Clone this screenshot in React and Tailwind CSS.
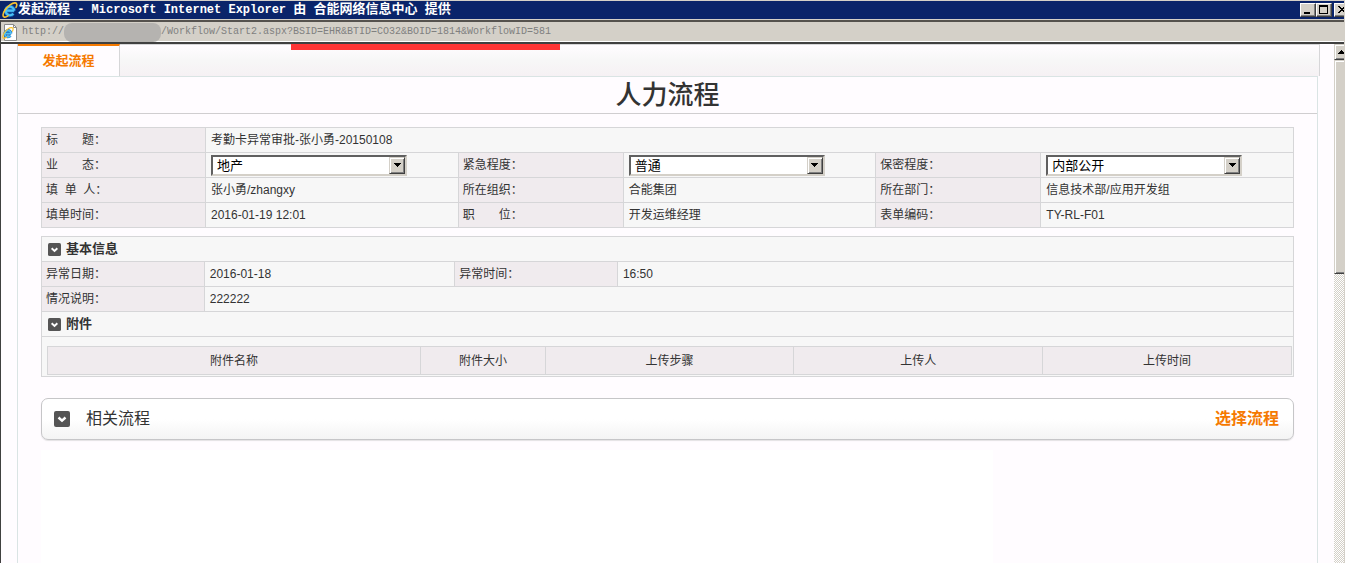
import React from 'react';

const RELATED_URL = '/Workflow/Start2.aspx?BSID=EHR&BTID=CO32&BOID=1814&WorkflowID=581';

const ATTACHMENT_COLUMNS = [
  { name: '附件名称', width: 'w-[30%]' },
  { name: '附件大小', width: 'w-[10%]' },
  { name: '上传步骤', width: 'w-[20%]' },
  { name: '上传人', width: 'w-[20%]' },
  { name: '上传时间', width: 'w-[20%]' },
];

const IeLogo = ({ className }) => (
  <svg viewBox="0 0 16 16" className={className} aria-hidden="true">
    <path
      d="M12.2 8.600H4.200M12.200 8.600A4.300 4.300 0 1 0 11.300 11.600"
      fill="none"
      stroke="#1668b8"
      strokeWidth="3.600"
    />
    <path
      d="M12.200 8.600H4.200M12.200 8.600A4.300 4.300 0 1 0 11.300 11.600"
      fill="none"
      stroke="#4cc0f5"
      strokeWidth="2.200"
    />
    <path
      d="M14 5.500c1.300-2.600 1.100-4.500-.9-4.600C10.300.7 5.700 4 3 8 .8 11.300.4 14.400 2.100 15c1.100.4 2.500-.2 3.900-1.200"
      fill="none"
      stroke="#f7c331"
      strokeWidth="1.600"
      strokeLinecap="round"
    />
  </svg>
);

const ToggleIcon = ({ className }) => (
  <svg viewBox="0 0 16 16" className={className} aria-hidden="true">
    <rect width="16" height="16" rx="2" fill="#555" />
    <path d="M4.500 6.500 8 9.700l3.500-3.200" fill="none" stroke="#fff" strokeWidth="2.400" />
  </svg>
);

const WindowButton = ({ label, children }) => (
  <button
    type="button"
    aria-label={label}
    className="h-[14px] w-4 shrink-0 border border-t-white border-l-white border-r-[#404040] border-b-[#404040] bg-[#d4d0c8] shadow-[inset_-1px_-1px_0_#808080]"
  >
    <svg viewBox="0 0 14 12" className="block h-3 w-[14px]" shapeRendering="crispEdges">
      {children}
    </svg>
  </button>
);

const TitleBar = () => (
  <header className="flex h-[19px] items-center overflow-hidden border-t border-[#d4d0c8] bg-[#0a246a] pl-0.5 text-white">
    <IeLogo className="h-4 w-4 shrink-0" />
    <h1 className="flex-1 whitespace-pre font-['Liberation_Mono','Noto_Sans_CJK_SC',monospace] text-[12px] leading-[18px] font-bold">
      <span className="text-[13px]">发起流程</span>
      {' - Microsoft Internet Explorer '}
      <span className="text-[13px]">由</span>{' '}
      <span className="text-[13px]">合能网络信息中心</span>{' '}
      <span className="text-[13px]">提供</span>
    </h1>
    <div className="flex w-11 overflow-hidden">
      <WindowButton label="最小化">
        <rect x="3" y="8" width="6" height="2" />
      </WindowButton>
      <WindowButton label="最大化">
        <path d="M2 1h9v9H2zM3 3v6h7V3z" fillRule="evenodd" />
      </WindowButton>
      <div className="w-0.5 shrink-0" />
      <WindowButton label="关闭">
        <path d="M3 2h2v1h1v1h2V3h1V2h2v1h-1v1H9v1H8v1h1v1h1v1h1v1H9V8H8V7H6v1H5v1H3V8h1V7h1V6h1V5H5V4H4V3H3z" />
      </WindowButton>
    </div>
  </header>
);

const AddressBar = () => (
  <div className="border-t border-[#d4d0c8]">
    <div className="flex h-6 items-center border-y-2 border-t-[#55524e] border-b-[#404040] border-l border-l-[#404040] bg-[#d4d0c8] shadow-[inset_0_-1px_0_#fff]">
      <svg viewBox="0 0 16 17" className="ml-px h-[17px] w-4" aria-hidden="true">
        <path d="M2.500.5h9l3 3v13h-12z" fill="#fff" stroke="#8a8a8a" />
        <path d="M11.500.5v3h3" fill="none" stroke="#8a8a8a" />
        <svg x="0" y="3" width="12" height="12" viewBox="0 0 16 16">
          <IeLogo />
        </svg>
      </svg>
      <div className="ml-1 flex items-center font-['Liberation_Mono',monospace] text-[10px] leading-[18px] text-[#808080]">
        http://
        <span className="h-[19px] w-[97px] rounded-[8px] bg-[#b5b3b0]" />
        {RELATED_URL}
      </div>
    </div>
  </div>
);

const ScrollBar = () => (
  <div
    className="w-[10px] shrink-0 overflow-hidden bg-[repeating-conic-gradient(#d4d0c8_0_25%,#fff_0_50%)] bg-[length:2px_2px]"
    aria-hidden="true"
  >
    <div className="flex h-4 w-4 items-center border border-[#d4d0c8] border-b-[#404040] bg-[#d4d0c8] pl-[3px] shadow-[inset_1px_1px_0_#fff,inset_-1px_-1px_0_#808080]">
      <svg viewBox="0 0 7 4" className="h-1 w-[7px]" shapeRendering="crispEdges">
        <path d="M3 0h1v1h1v1h1v1h1v1H0V3h1V2h1V1h1z" />
      </svg>
    </div>
    <div className="h-[214px] w-4 border border-[#d4d0c8] border-b-[#404040] bg-[#d4d0c8] shadow-[inset_1px_1px_0_#fff,inset_-1px_-1px_0_#808080]" />
  </div>
);

const Label = ({ children, htmlFor }) => (
  <th
    scope="row"
    className="h-[25px] border border-[#d6d6d8] bg-[#f0ebee] px-1 text-left font-normal whitespace-pre"
  >
    {htmlFor ? <label htmlFor={htmlFor}>{children}</label> : children}
  </th>
);

const Value = ({ children, colSpan }) => (
  <td colSpan={colSpan} className="h-[25px] border border-[#d6d6d8] px-[5px]">
    {children}
  </td>
);

const SelectBox = ({ id, options }) => (
  <div className="relative h-[21px] w-[196px]">
    <select
      id={id}
      className="block h-full w-full appearance-none border-2 border-t-[#606060] border-l-[#606060] border-r-[#d4d0c8] border-b-[#d4d0c8] bg-white pr-5 pl-1 text-[13px] leading-[17px] text-black"
    >
      {options.map((option) => (
        <option key={option}>{option}</option>
      ))}
    </select>
    <span className="pointer-events-none absolute top-0.5 right-0.5 flex h-[17px] w-4 items-center justify-center border border-t-[#d4d0c8] border-l-[#d4d0c8] border-r-[#404040] border-b-[#404040] bg-[#d4d0c8] shadow-[inset_1px_1px_0_#fff,inset_-1px_-1px_0_#808080]">
      <svg viewBox="0 0 7 4" className="h-1 w-[7px]" shapeRendering="crispEdges" aria-hidden="true">
        <path d="M0 0h7v1H6v1H5v1H4v1H3V3H2V2H1V1H0z" />
      </svg>
    </span>
  </div>
);

const SectionRow = ({ title }) => (
  <tr>
    <th colSpan={4} className="h-[25px] border border-[#d6d6d8] px-1.5 text-left text-[13px]">
      <button type="button" className="flex items-center gap-[5px] font-bold">
        <ToggleIcon className="h-[13px] w-[13px]" />
        {title}
      </button>
    </th>
  </tr>
);

const ProcessInfo = () => (
  <table className="w-full table-fixed border-collapse bg-[#f7f7f7]">
    <colgroup>
      <col className="w-[164px]" />
      <col />
      <col className="w-[165px]" />
      <col />
      <col className="w-[165px]" />
      <col />
    </colgroup>
    <tbody>
      <tr>
        <Label>{'标\u3000\u3000题：'}</Label>
        <Value colSpan={5}>考勤卡异常审批-张小勇-20150108</Value>
      </tr>
      <tr>
        <Label htmlFor="business">{'业\u3000\u3000态：'}</Label>
        <Value>
          <SelectBox id="business" options={['地产']} />
        </Value>
        <Label htmlFor="urgency">紧急程度：</Label>
        <Value>
          <SelectBox id="urgency" options={['普通']} />
        </Value>
        <Label htmlFor="secrecy">保密程度：</Label>
        <Value>
          <SelectBox id="secrecy" options={['内部公开']} />
        </Value>
      </tr>
      <tr>
        <Label>{'填  单  人：'}</Label>
        <Value>张小勇/zhangxy</Value>
        <Label>所在组织：</Label>
        <Value>合能集团</Value>
        <Label>所在部门：</Label>
        <Value>信息技术部/应用开发组</Value>
      </tr>
      <tr>
        <Label>填单时间：</Label>
        <Value>2016-01-19 12:01</Value>
        <Label>{'职\u3000\u3000位：'}</Label>
        <Value>开发运维经理</Value>
        <Label>表单编码：</Label>
        <Value>TY-RL-F01</Value>
      </tr>
    </tbody>
  </table>
);

const Attachments = () => (
  <table className="w-full table-fixed border-collapse bg-[#f0ebee]">
    <thead>
      <tr>
        {ATTACHMENT_COLUMNS.map((col) => (
          <th
            key={col.name}
            scope="col"
            className={`h-7 border border-[#d6d6d8] text-center font-normal ${col.width}`}
          >
            {col.name}
          </th>
        ))}
      </tr>
    </thead>
  </table>
);

const BasicInfo = () => (
  <table className="mt-2 w-full table-fixed border-collapse bg-[#f7f7f7]">
    <colgroup>
      <col className="w-[13%]" />
      <col className="w-[20%]" />
      <col className="w-[13%]" />
      <col />
    </colgroup>
    <tbody>
      <SectionRow title="基本信息" />
      <tr>
        <Label>异常日期：</Label>
        <Value>2016-01-18</Value>
        <Label>异常时间：</Label>
        <Value>16:50</Value>
      </tr>
      <tr>
        <Label>情况说明：</Label>
        <Value colSpan={3}>222222</Value>
      </tr>
      <SectionRow title="附件" />
      <tr>
        <td colSpan={4} className="border border-[#d6d6d8] pt-[9px] pr-px pb-px pl-[5px]">
          <Attachments />
        </td>
      </tr>
    </tbody>
  </table>
);

const RelatedProcess = () => (
  <section className="mt-[21px] flex h-[42px] items-center justify-between rounded-[7px] border border-[#c6c6c8] bg-linear-to-b from-white from-50% to-[#f4f4f4] pr-[14px] pl-3 text-[16px] shadow-[0_1px_1px_#e4e2e4]">
    <button type="button" className="flex items-center gap-4">
      <ToggleIcon className="h-4 w-4" />
      相关流程
    </button>
    <a href="#select" className="font-bold text-[#f57900]">
      选择流程
    </a>
  </section>
);

export default function App() {
  return (
    <div className="bg-white pr-px">
      <div className="flex min-h-screen flex-col border-r border-[#d4d0c8] bg-[#fffcff] font-['Liberation_Sans','Noto_Sans_CJK_SC',sans-serif] text-[12px] leading-[18px] text-[#333]">
        <TitleBar />
        <AddressBar />
        <div className="relative flex flex-1 border-l border-[#404040]">
          <div className="absolute top-0 left-[290px] h-1.5 w-[269px] bg-[#ff3535]" />
          <main className="flex flex-1 flex-col pr-[14px] pl-4">
            <nav className="flex h-8 border-x border-t border-[#d6d6d8] bg-linear-to-b from-[#fffcff] via-[#f7f7f7] to-[#f6f1f4]">
              <a
                href="#start"
                className="-mt-px flex w-[102px] items-center justify-center border-t-2 border-r border-t-[#f57900] border-r-[#d6d6d8] bg-[#fffcff] text-[13px] font-bold text-[#f57900]"
              >
                发起流程
              </a>
            </nav>
            <div className="mr-0.5 flex-1 border-x border-t border-[#dae4e4]">
              <h2 className="border-b border-[#d0ced0] text-center text-[26px] leading-[36px] font-medium">
                人力流程
              </h2>
              <div className="px-[23px] pt-[13px]">
                <ProcessInfo />
                <BasicInfo />
                <RelatedProcess />
                <div className="mt-2.5 h-[113px] w-[76%] bg-white" />
              </div>
            </div>
          </main>
          <ScrollBar />
        </div>
      </div>
    </div>
  );
}
